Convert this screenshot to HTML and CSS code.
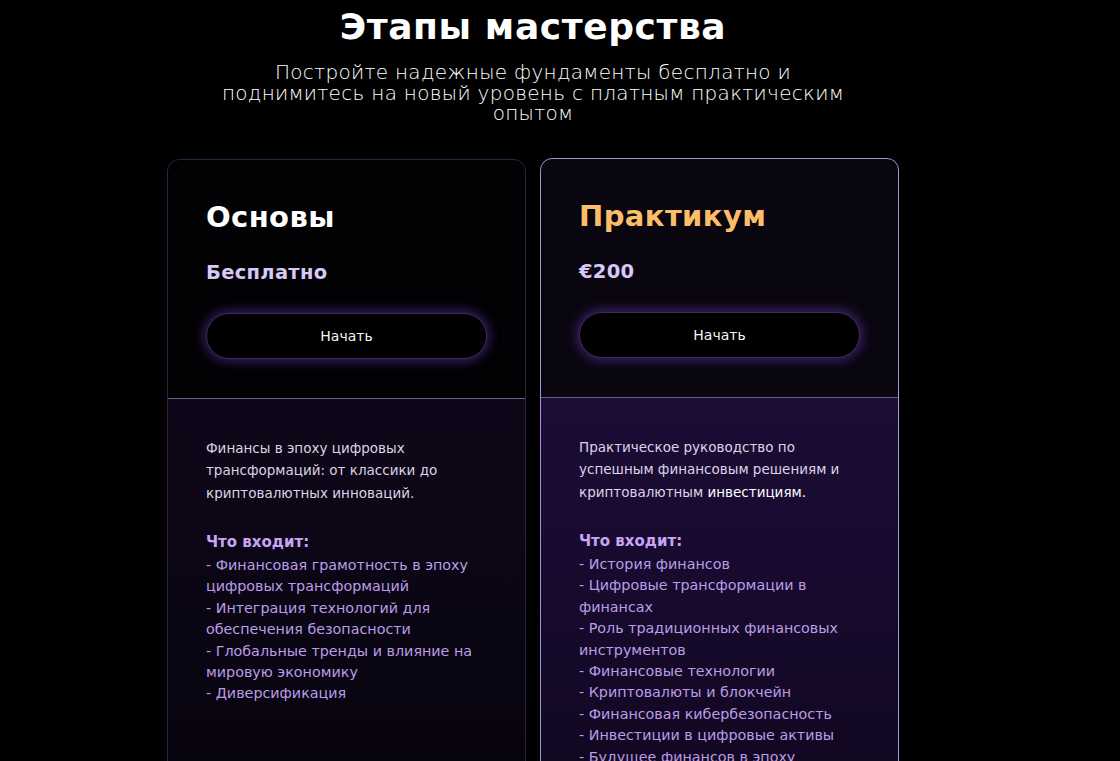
FILE: index.html
```html
<!DOCTYPE html>
<html lang="ru">
<head>
<meta charset="utf-8">
<title>Этапы мастерства</title>
<link rel="stylesheet" href="styles.css">
</head>
<body>
<main class="page">
  <header class="intro">
    <h1 class="intro-title">Этапы мастерства</h1>
    <p class="intro-sub">Постройте надежные фундаменты бесплатно и поднимитесь на новый уровень с платным практическим опытом</p>
  </header>
  <section class="plans">
    <article class="plan plan-free">
      <div class="plan-head">
        <h2 class="plan-name">Основы</h2>
        <div class="plan-price">Бесплатно</div>
        <button class="plan-btn">Начать</button>
      </div>
      <div class="plan-body">
        <p class="plan-desc">Финансы в эпоху цифровых трансформаций: от классики до криптовалютных инноваций.</p>
        <h3 class="plan-inc">Что входит:</h3>
        <ul class="plan-list">
          <li>- Финансовая грамотность в эпоху цифровых трансформаций</li>
          <li>- Интеграция технологий для обеспечения безопасности</li>
          <li>- Глобальные тренды и влияние на мировую экономику</li>
          <li>- Диверсификация</li>
        </ul>
      </div>
    </article>
    <article class="plan plan-pro">
      <div class="plan-head">
        <h2 class="plan-name plan-name-gold">Практикум</h2>
        <div class="plan-price">€200</div>
        <button class="plan-btn">Начать</button>
      </div>
      <div class="plan-body">
        <p class="plan-desc">Практическое руководство по успешным финансовым решениям и криптовалютным <span class="hl">инвестициям.</span></p>
        <h3 class="plan-inc">Что входит:</h3>
        <ul class="plan-list">
          <li>- История финансов</li>
          <li>- Цифровые трансформации в финансах</li>
          <li>- Роль традиционных финансовых инструментов</li>
          <li>- Финансовые технологии</li>
          <li>- Криптовалюты и блокчейн</li>
          <li>- Финансовая кибербезопасность</li>
          <li>- Инвестиции в цифровые активы</li>
          <li>- Будущее финансов в эпоху цифровых технологий</li>
        </ul>
      </div>
    </article>
  </section>
</main>
</body>
</html>
```

FILE: styles.css
```css
* { box-sizing: border-box; }
html, body { margin: 0; padding: 0; background: #000; }
body {
  font-family: "DejaVu Sans", "Noto Sans", sans-serif;
  color: #fff;
  height: 761px;
  overflow: hidden;
}
.page {
  width: 1066px;
  display: flex;
  flex-direction: column;
  align-items: center;
}
.intro {
  display: flex;
  flex-direction: column;
  align-items: center;
  text-align: center;
}
.intro-title {
  margin: 4px 0 0;
  font-size: 36px;
  font-weight: 700;
  line-height: 46px;
  letter-spacing: 0.6px;
}
.intro-sub {
  margin: 12px 0 0;
  width: 640px;
  font-size: 20px;
  font-weight: 200;
  line-height: 20.5px;
  letter-spacing: 0.3px;
  color: #fff;
}
.plans {
  margin-top: 35px;
  display: flex;
  gap: 14px;
  align-items: flex-start;
}
.plan {
  width: 359px;
  border-radius: 12px;
  border: 1px solid #2c2242;
  overflow: hidden;
  height: 640px;
  display: flex;
  flex-direction: column;
}
.plan-free { background: #020103; }
.plan-pro { border-color: #a592d8; background: #09060f; margin-top: -1px; }
.plan-head {
  padding: 38px 38px 38px;
  height: 239px;
  border-bottom: 1px solid #6b5c8c;
}
.plan-name {
  margin: 0;
  font-size: 29px;
  font-weight: 700;
  line-height: 38px;
  letter-spacing: 0.4px;
  color: #fff;
}
.plan-name-gold { color: #fcbd6a; }
.plan-price {
  margin-top: 24px;
  font-size: 19.5px;
  font-weight: 700;
  line-height: 25px;
  letter-spacing: 0.3px;
  color: #d8c8f6;
}
.plan-btn {
  margin-top: 28px;
  width: 281px;
  height: 46px;
  border-radius: 23px;
  border: 1px solid #3b2d58;
  background: #000;
  color: #f4f4f4;
  font-family: inherit;
  font-size: 14px;
  box-shadow: 0 0 12px 2px rgba(110, 60, 200, 0.55);
  display: block;
}
.plan-body {
  flex: 1;
  padding: 38px 38px 0;
}
.plan-free .plan-body { background: linear-gradient(180deg, #0e0719 0%, #0a0513 60%, #07030d 100%); }
.plan-pro .plan-body { background: linear-gradient(180deg, #1c0c36 0%, #170a2d 50%, #11071f 100%); }
.plan-desc {
  margin: 0;
  font-size: 13.5px;
  line-height: 22.5px;
  color: #dcd4e6;
}
.hl { color: #fff; }
.plan-inc {
  margin: 26px 0 0;
  font-size: 15px;
  font-weight: 700;
  line-height: 25px;
  color: #c8a4f4;
}
.plan-list {
  list-style: none;
  margin: 0;
  padding: 0;
  font-size: 14.3px;
  line-height: 21.4px;
  color: #bb9ce6;
}
```
